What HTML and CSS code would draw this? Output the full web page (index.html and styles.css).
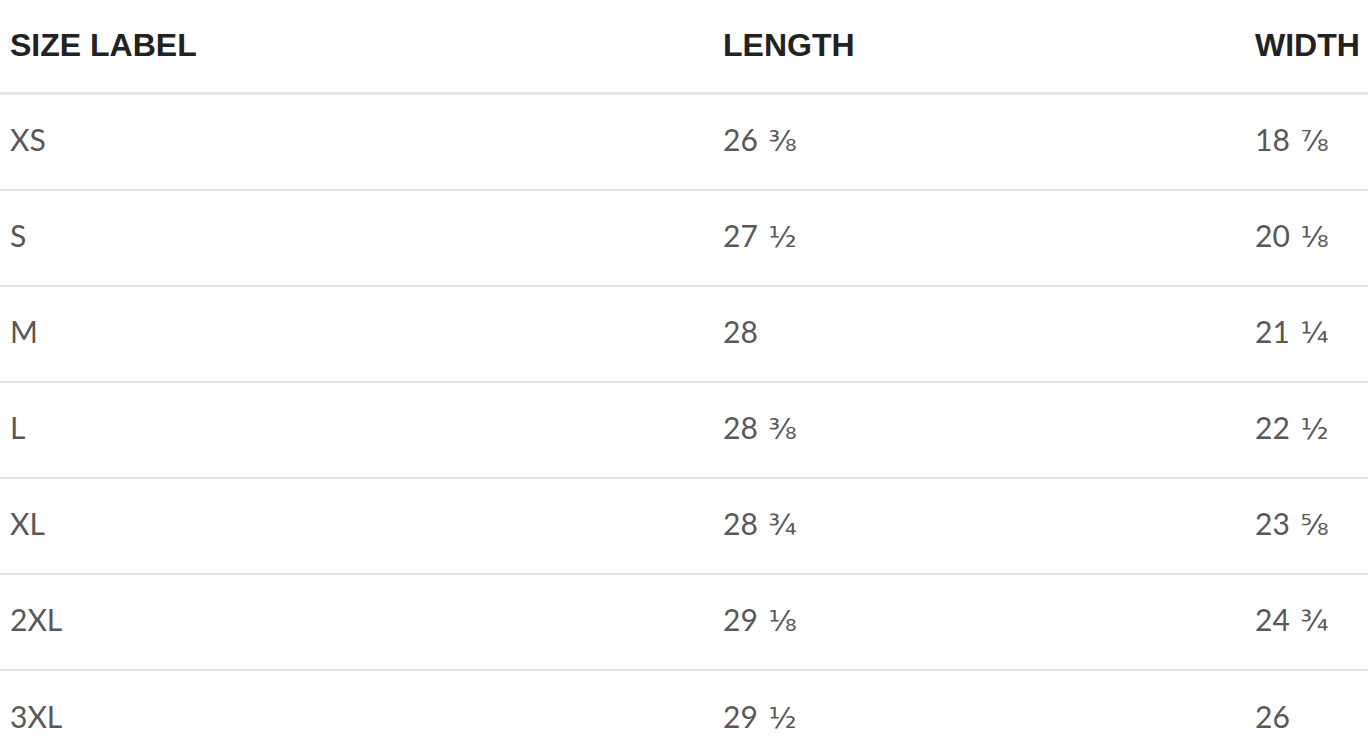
FILE: index.html
```html
<!DOCTYPE html>
<html lang="en">
<head>
<meta charset="utf-8">
<title>Size chart</title>
<link rel="stylesheet" href="styles.css">
</head>
<body>
<div class="chart">
  <div class="row head">
    <div class="cell">SIZE LABEL</div>
    <div class="cell">LENGTH</div>
    <div class="cell">WIDTH</div>
  </div>
  <div class="row">
    <div class="cell">XS</div>
    <div class="cell">26 <span class="frac">⅜</span></div>
    <div class="cell">18 <span class="frac">⅞</span></div>
  </div>
  <div class="row">
    <div class="cell">S</div>
    <div class="cell">27 <span class="frac">½</span></div>
    <div class="cell">20 <span class="frac">⅛</span></div>
  </div>
  <div class="row">
    <div class="cell">M</div>
    <div class="cell">28</div>
    <div class="cell">21 <span class="frac">¼</span></div>
  </div>
  <div class="row">
    <div class="cell">L</div>
    <div class="cell">28 <span class="frac">⅜</span></div>
    <div class="cell">22 <span class="frac">½</span></div>
  </div>
  <div class="row">
    <div class="cell">XL</div>
    <div class="cell">28 <span class="frac">¾</span></div>
    <div class="cell">23 <span class="frac">⅝</span></div>
  </div>
  <div class="row">
    <div class="cell">2XL</div>
    <div class="cell">29 <span class="frac">⅛</span></div>
    <div class="cell">24 <span class="frac">¾</span></div>
  </div>
  <div class="row last">
    <div class="cell">3XL</div>
    <div class="cell">29 <span class="frac">½</span></div>
    <div class="cell">26</div>
  </div>
</div>
</body>
</html>
```

FILE: styles.css
```css
html, body {
  margin: 0;
  padding: 0;
  background: #ffffff;
}

.chart {
  width: 1368px;
  overflow: hidden;
  font-family: "Lato", "Open Sans", sans-serif;
}

.row {
  display: grid;
  grid-template-columns: 713px 532px 1fr;
  align-items: center;
  box-sizing: border-box;
  height: 96px;
  padding-bottom: 6px;
  border-bottom: 2px solid #e3e3e3;
  color: #585858;
  font-size: 30px;
}

.row.head {
  height: 95px;
  border-bottom: 3px solid #e5e5e5;
  padding-bottom: 2px;
  color: #222222;
  font-family: "Liberation Sans", Arial, sans-serif;
  font-weight: bold;
  font-size: 32px;
}

.row.last {
  border-bottom: none;
}

.cell {
  padding-left: 10px;
  white-space: nowrap;
}

.frac {
  font-family: "DejaVu Sans", sans-serif;
  font-size: 29px;
  margin-left: 3px;
  color: #585858;
}
```
